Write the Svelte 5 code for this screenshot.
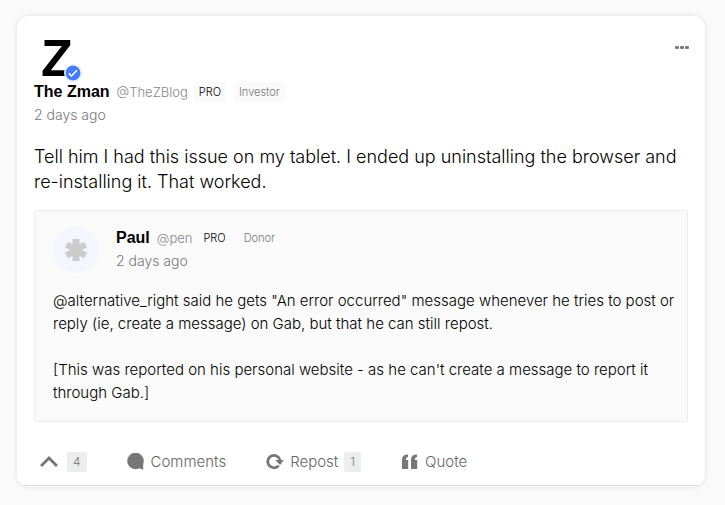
<script>
    const post = {
        name: "The Zman",
        handle: "@TheZBlog",
        role: "Investor",
        time: "2 days ago",
        body: "Tell him I had this issue on my tablet. I ended up uninstalling the browser and re-installing it. That worked.",
    };

    const quoted = {
        name: "Paul",
        handle: "@pen",
        role: "Donor",
        time: "2 days ago",
        paragraphs: [
            "@alternative_right said he gets \"An error occurred\" message whenever he tries to post or reply (ie, create a message) on Gab, but that he can still repost.",
            "[This was reported on his personal website - as he can't create a message to report it through Gab.]",
        ],
    };

    let upvotes = 4;
    let reposts = 1;
</script>

{#snippet byline(user)}
    <div class="byline">
        <a class="name" href="#profile">{user.name}</a>
        <a class="handle" href="#profile">{user.handle}</a>
        <span class="tag pro">PRO</span>
        <span class="tag">{user.role}</span>
    </div>
    <time class="time">{user.time}</time>
{/snippet}

<article class="post">
    <header class="post_header">
        <div>
            <div class="avatar">
                <span class="avatar_letter">Z</span>
                <svg class="verified" viewBox="0 0 18 18" aria-label="Verified">
                    <circle cx="9" cy="9" r="9" fill="#cfdcff" />
                    <circle cx="9" cy="9" r="8.4" fill="#fff" />
                    <circle cx="9" cy="9" r="7.5" fill="#467dfa" />
                    <path d="M4.8 9.4l2.7 2.6 5.4-5.7" fill="none" stroke="#fff" stroke-width="1.5" />
                </svg>
            </div>
            {@render byline(post)}
        </div>
        <button class="more" aria-label="More options">
            <svg width="14" height="4" viewBox="0 0 14 4" fill="#777">
                <rect x="0" y="0" width="4" height="3" rx="1.2" />
                <rect x="5" y="0" width="4" height="3" rx="1.2" />
                <rect x="10" y="0" width="4" height="3" rx="1.2" />
            </svg>
        </button>
    </header>

    <p class="body">{post.body}</p>

    <section class="quoted">
        <div class="quoted_header">
            <div class="quoted_avatar">
                <svg width="22" height="24" viewBox="-11 -12 22 24" fill="#ccc">
                    <rect x="-3.5" y="-11" width="7" height="22" />
                    <rect x="-3.2" y="-11" width="6.4" height="22" transform="rotate(60)" />
                    <rect x="-3.2" y="-11" width="6.4" height="22" transform="rotate(-60)" />
                </svg>
            </div>
            <div class="quoted_author">
                {@render byline(quoted)}
            </div>
        </div>
        {#each quoted.paragraphs as text}
            <p>{text}</p>
        {/each}
    </section>

    <footer class="actions">
        <button class="action" aria-label="Upvote">
            <svg width="18" height="18" viewBox="0 0 18 18">
                <path d="M1 13L9 5l8 8" fill="none" stroke="#777" stroke-width="3" />
            </svg>
            <span class="count vote">{upvotes}</span>
        </button>
        <button class="action">
            <svg width="18" height="18" viewBox="0 0 18 18" fill="#777">
                <circle cx="8.5" cy="8" r="8.3" />
                <path d="M9 14l7.2-3.5v6.2z" />
            </svg>
            Comments
        </button>
        <button class="action">
            <svg width="18" height="18" viewBox="0 0 18 18">
                <path d="M12.7 12.7A6.2 6.2 0 1 1 14 7" fill="none" stroke="#777" stroke-width="2.8" />
                <path d="M9.2 7.1h8.6l-3.7 4.8z" fill="#777" />
            </svg>
            Repost
            <span class="count">{reposts}</span>
        </button>
        <button class="action">
            <svg width="18" height="18" viewBox="0 0 18 18" fill="#777">
                <path d="M1 16V6.5Q1 1.5 7 1.5v2.6Q5 4.1 4.8 7H7.2v9z" />
                <path d="M10 16V6.5Q10 1.5 16 1.5v2.6Q14 4.1 13.8 7H16.2v9z" />
            </svg>
            Quote
        </button>
    </footer>
</article>

<style>
    :global(body) {
        background: #fafafa;
        font-family: Inter, "Liberation Sans", Arial, sans-serif;
        font-weight: 300;
        color: #000;
    }

    .post {
        margin: 16px 20px 18px 17px;
        background: #fff;
        border-radius: 12px;
        overflow: hidden;
        box-shadow: 0 0 5px rgba(0, 0, 0, 0.12);
        padding-bottom: 1px;
    }

    .post_header {
        display: flex;
        justify-content: space-between;
        align-items: flex-start;
        padding: 18px 16px 0 17px;
    }

    .avatar {
        position: relative;
        width: 48px;
        height: 48px;
    }

    .avatar_letter {
        display: block;
        padding-left: 7px;
        font-family: "Liberation Sans", Arial, sans-serif;
        font-size: 52px;
        font-weight: bold;
        line-height: 48px;
        color: #000;
    }

    .verified {
        position: absolute;
        right: 0;
        bottom: 0;
        width: 18px;
        height: 18px;
    }

    .byline {
        display: flex;
        align-items: baseline;
        line-height: 20px;
    }

    .byline a {
        text-decoration: none;
    }

    .name {
        font-family: "Liberation Sans", Arial, sans-serif;
        font-size: 16px;
        font-weight: bold;
        color: #000;
    }

    .handle {
        margin-left: 7px;
        margin-right: 6px;
        font-size: 13px;
        color: #888;
    }

    .tag {
        align-self: flex-start;
        margin-right: 8px;
        padding: 0 5px;
        border-radius: 3px;
        background: #fafafa;
        font-size: 11px;
        color: #777;
    }

    .pro {
        color: #000;
    }

    .time {
        display: block;
        margin-top: 1px;
        font-size: 14px;
        line-height: 24px;
        color: #777;
    }

    .more {
        display: flex;
        margin-top: 12px;
        padding: 0;
        border: 0;
        background: none;
    }

    .body {
        margin: 17px 17px 16px;
        font-size: 18px;
        line-height: 25px;
    }

    .quoted {
        margin: 0 17px;
        padding: 16px 10px 17px 18px;
        border: 1px solid #ececec;
        border-radius: 3px;
        background: #fafafa;
        font-size: 15px;
        line-height: 23px;
    }

    .quoted_header {
        display: flex;
        gap: 17px;
        margin-bottom: 16px;
    }

    .quoted_author {
        padding-top: 1px;
    }

    .quoted_avatar {
        display: flex;
        align-items: center;
        justify-content: center;
        width: 46px;
        height: 46px;
        border-radius: 50%;
        background: #f5f5ff;
    }

    .quoted p {
        margin: 0 0 23px;
    }

    .quoted p:last-child {
        margin-bottom: 0;
    }

    .actions {
        display: flex;
        gap: 40px;
        padding: 30px 23px 13px;
        border-bottom: 1px solid #d8dadb;
    }

    .action {
        display: flex;
        align-items: center;
        gap: 6px;
        padding: 0;
        border: 0;
        background: none;
        font-family: inherit;
        font-size: 15px;
        font-weight: inherit;
        line-height: 20px;
        color: #666;
    }

    .count {
        padding: 0 6px;
        border-radius: 2px;
        background: #eceeee;
        font-size: 12px;
        color: #777;
    }

    .vote {
        margin-left: 3px;
    }
</style>
